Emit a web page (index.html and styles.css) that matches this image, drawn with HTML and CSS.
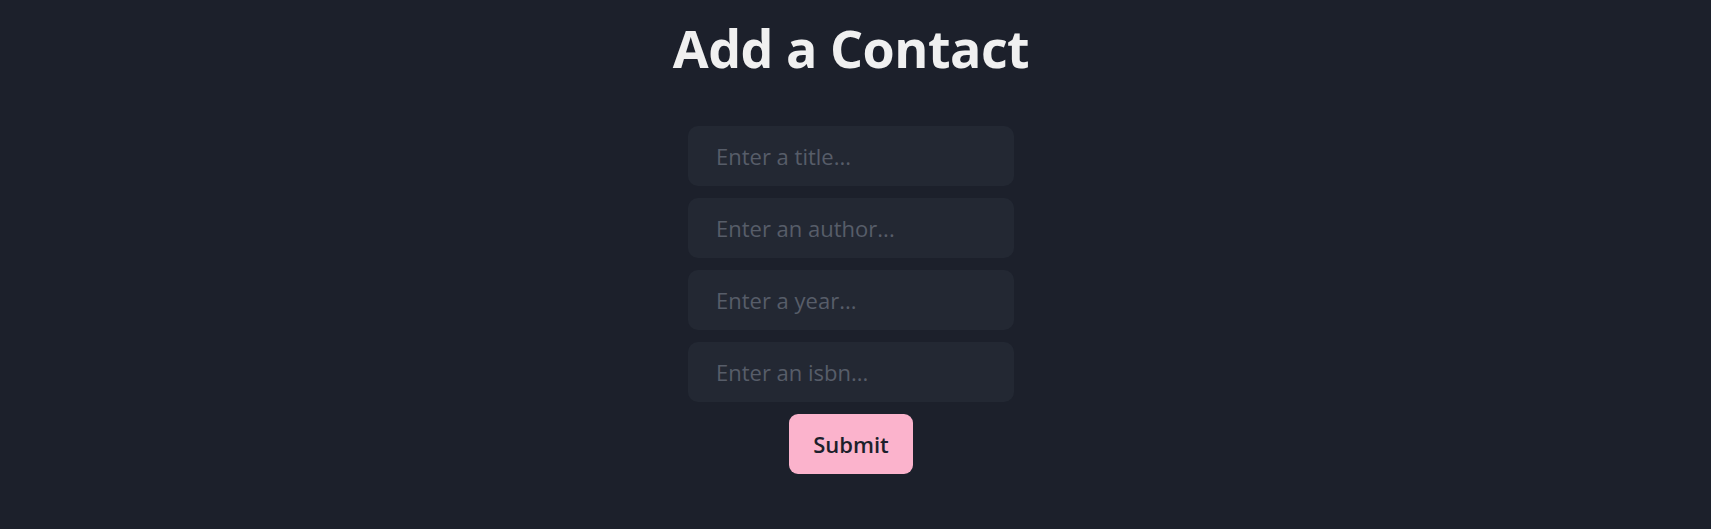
FILE: index.html
```html
<!DOCTYPE html>
<html>
<head>
<meta charset="utf-8">
<link rel="stylesheet" href="styles.css">
</head>
<body>
<main class="page">
  <h1 class="title">Add a Contact</h1>
  <form class="form">
    <input class="field" type="text" placeholder="Enter a title...">
    <input class="field" type="text" placeholder="Enter an author...">
    <input class="field" type="text" placeholder="Enter a year...">
    <input class="field" type="text" placeholder="Enter an isbn...">
    <button class="submit" type="button">Submit</button>
  </form>
</main>
</body>
</html>
```
FILE: styles.css
```css
html, body {
  margin: 0;
  padding: 0;
  background: #1c202b;
  height: 100%;
}
body {
  font-family: "Open Sans", "Noto Sans", sans-serif;
  padding-right: 9px;
}
.page {
  display: flex;
  flex-direction: column;
  align-items: center;
}
.title {
  margin: 12px 0 0;
  font-size: 52px;
  line-height: 72px;
  font-weight: 700;
  color: #f0f0f0;
  letter-spacing: -0.5px;
}
.form {
  margin-top: 42px;
  display: flex;
  flex-direction: column;
  align-items: center;
  gap: 12px;
}
.field {
  box-sizing: border-box;
  width: 326px;
  height: 60px;
  border: none;
  outline: none;
  border-radius: 10px;
  background: #232833;
  color: #e5e7eb;
  padding: 0 28px;
  font-family: inherit;
  font-size: 22px;
}
.field::placeholder {
  color: #575d69;
}
.submit {
  box-sizing: border-box;
  width: 124px;
  height: 60px;
  border: none;
  border-radius: 9px;
  background: #fbb3cc;
  color: #1c1f2b;
  font-family: inherit;
  font-size: 22px;
  font-weight: 600;
  cursor: pointer;
}
```
